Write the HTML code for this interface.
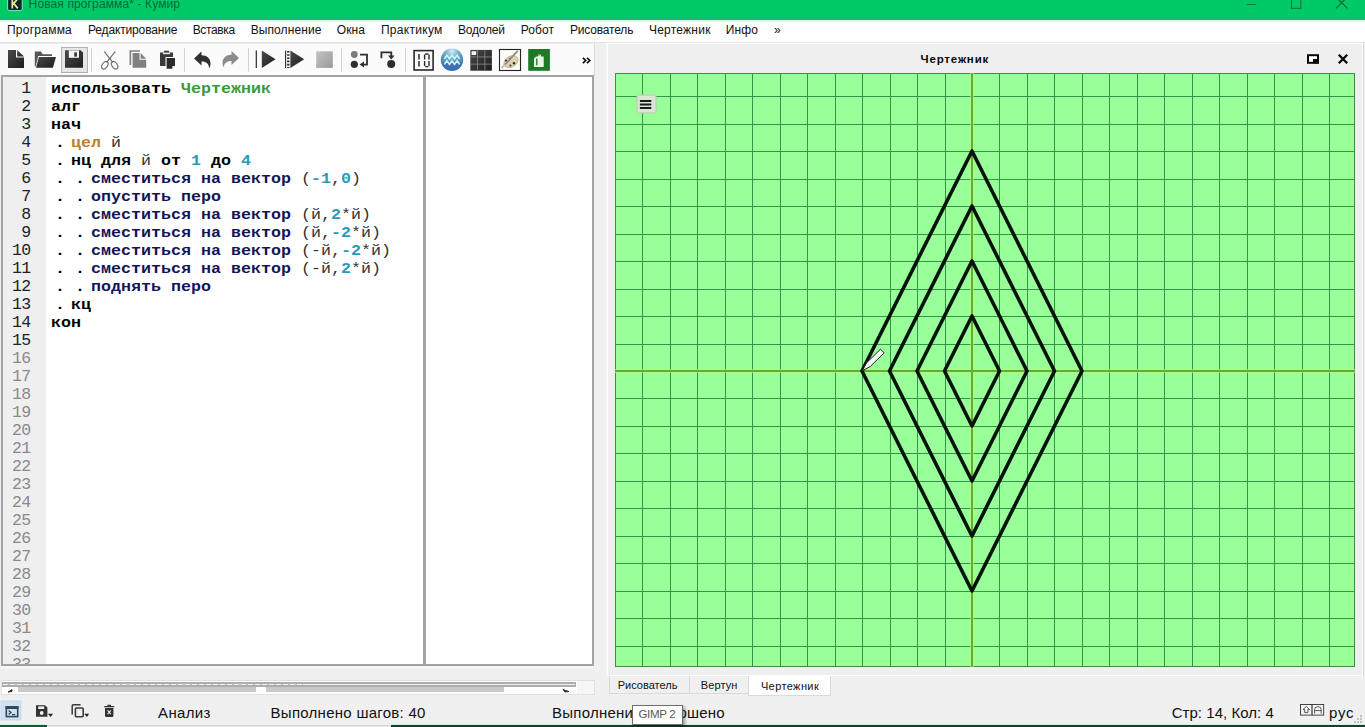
<!DOCTYPE html>
<html lang="ru"><head><meta charset="utf-8"><title>Кумир</title>
<style>
*{box-sizing:border-box;margin:0;padding:0}
html,body{width:1365px;height:727px;overflow:hidden;background:#f0f0f0}
body{position:relative;font-family:"Liberation Sans","DejaVu Sans",sans-serif;color:#000}
.abs{position:absolute}
#title{left:0;top:0;width:1365px;height:20px;background:linear-gradient(#00ca68 0,#00ca68 15px,#14bd72 19px,#22b876 20px)}
.tx{position:absolute;white-space:nowrap;line-height:1;color:#111}
#menu{left:0;top:20px;width:1365px;height:23px;background:#fff}
#tb{left:0;top:43px;width:595px;height:33px;background:#fbfbfb;border-top:1px solid #ebebeb;border-right:1px solid #dcdcdc}
.sep{position:absolute;top:48px;width:1px;height:24px;background:#cfcfcf}
#ed{left:1px;top:75px;width:593px;height:591px;border:2px solid #a3a3a3;background:#fff;overflow:hidden}
#gut{left:0;top:0;width:43px;height:587px;background:#efefef}
#split{left:420px;top:0;width:3px;height:587px;background:#a3a3a3}
.ln{position:absolute;left:0;width:27.5px;text-align:right;font-family:"Liberation Mono","DejaVu Sans Mono",monospace;font-size:16.5px;line-height:18px;color:#8a8a8a;letter-spacing:-0.6px}
.ln.k{color:#222}
.cl{position:absolute;left:48px;white-space:pre;font-family:"Liberation Mono",monospace;font-size:16.67px;line-height:18px;font-weight:bold;color:#000;height:18px;transform:scaleY(0.885);transform-origin:0 13.4px}
.cl .d{display:inline-block;width:20px;padding-left:4px}
.cl .g{color:#3a9a3a}.cl .o{color:#b8822e}.cl .n{font-weight:normal;color:#333}
.cl .b{color:#2a9ab8}.cl .f{color:#14145a}
#panel{left:607px;top:43px;width:756px;height:633px;background:#efefef;border:1px solid #fff;box-shadow:1px 0 0 #d6d6d6,-1px -1px 0 #f8f8f8}
#cv{left:615px;top:73px;width:740px;height:594px}
.tab{position:absolute;top:676px;height:18px;border:1px solid #d9d9d9;border-top:none;background:#f0f0f0}
</style></head><body>
<div id="title" class="abs"></div>
<!--TITLEICONS-->
<div id="menu" class="abs"></div>
<div id="tb" class="abs"></div>
<svg class="abs" style="left:0;top:43px" width="596" height="32" viewBox="0 43 596 32">
<defs>
<linearGradient id="dk" x1="0" y1="0" x2="1" y2="1"><stop offset="0" stop-color="#4a4a4a"/><stop offset="1" stop-color="#1e1e1e"/></linearGradient>
<linearGradient id="gy" x1="0" y1="0" x2="1" y2="1"><stop offset="0" stop-color="#c4c4c4"/><stop offset="1" stop-color="#9a9a9a"/></linearGradient>
<radialGradient id="aq" cx="0.5" cy="0.12" r="0.95"><stop offset="0" stop-color="#d4eefa"/><stop offset="0.35" stop-color="#6aa6c8"/><stop offset="0.7" stop-color="#4686b0"/><stop offset="1" stop-color="#3a70b4"/></radialGradient>
</defs>
<!-- new -->
<g transform="translate(8 50)" fill="url(#dk)"><path d="M0 0H8V7.6H16V18H0Z"/><path d="M9.2 0L16 6.4H9.2Z"/></g>
<!-- open -->
<g transform="translate(0 0)"><path d="M34.8 51.4H41L42.6 54.2H52V56H38.2L35.6 66.5H34.8Z" fill="#555"/><path d="M38.8 56.9H56L52.9 67.7H36Z" fill="url(#dk)"/></g>
<!-- save -->
<rect x="61.5" y="47.5" width="26" height="25" fill="#e6e6e6" stroke="#b2b2b2"/>
<path d="M65 50.2H80.5L83 52.6V67.8H65Z" fill="url(#dk)"/><rect x="68.8" y="50.4" width="10.2" height="7.4" fill="#f4f4f4"/><rect x="74.3" y="52.4" width="2.6" height="4.2" fill="#333"/>
<!-- separators -->
<path d="M91.5 48V72M184.5 48V72M248.5 48V72M341.5 48V72M405.5 48V72" stroke="#d2d2d2" stroke-width="1"/>
<!-- cut -->
<g fill="none" stroke="#707070" stroke-width="1.15" stroke-linecap="round"><path d="M104.5 51.8L112.6 62.2M115 51.8L106.9 62.2"/><ellipse cx="104.9" cy="65.2" rx="2.6" ry="4.2" transform="rotate(34 104.9 65.2)"/><ellipse cx="114.6" cy="65.2" rx="2.6" ry="4.2" transform="rotate(-34 114.6 65.2)"/><circle cx="109.75" cy="58.9" r="0.5"/></g>
<!-- copy -->
<g fill="#808080"><path d="M129.5 50.2H140V51.8H131.2V65H129.5Z"/><path d="M132.6 53H139.5V59.8H146.2V67.8H132.6Z"/><path d="M140.6 53L146.2 58.7H140.6Z"/></g>
<!-- paste -->
<g><path d="M160 52.4H164V50.8H169V52.4H173V57H165.5V66H160Z" fill="#3a3a3a"/><rect x="163" y="52.6" width="7" height="1.6" fill="#e8e8e8"/><path d="M166.6 58H175V65.6L172 68.7H166.6Z" fill="#2a2a2a"/><path d="M172.4 66H175L172.4 68.7Z" fill="#f0f0f0"/></g>
<!-- undo -->
<path d="M201.5 51.5V55.3C207 55.3 210.5 58.5 210.5 63.5C210.5 65.5 210 67 209 68.2C209 64 206.5 61.6 201.5 61.6V65.4L194 58.4Z" fill="#303030"/>
<!-- redo -->
<path d="M231.5 51V54.8C226 54.8 222.5 58 222.5 63C222.5 65 223 66.2 224 67.2C224 63.5 226.5 61.1 231.5 61.1V64.9L239 57.9Z" fill="#8c8c8c"/>
<!-- run -->
<path d="M256.3 50.5V68" stroke="#2a2a2a" stroke-width="1.2"/><path d="M261.8 50.5L275.6 59.3L261.8 68.1Z" fill="url(#dk)"/>
<!-- step run -->
<path d="M285.6 50.5V68" stroke="#2a2a2a" stroke-width="1.1"/><path d="M288.3 51V68" stroke="#2a2a2a" stroke-width="2.4" stroke-dasharray="1.6 1.6"/><path d="M290.4 50.5L304.2 59.3L290.4 68.1Z" fill="url(#dk)"/>
<!-- stop -->
<rect x="316.2" y="51.3" width="16.6" height="16.6" fill="url(#gy)"/>
<!-- step in -->
<circle cx="354.3" cy="54.5" r="3.4" fill="#7c7c7c"/><circle cx="354.3" cy="64.3" r="3.6" fill="#2e2e2e"/><path d="M360 54.6H367V64.6H363" fill="none" stroke="#2e2e2e" stroke-width="1.8"/><path d="M359.6 64.6L364 61.6V67.6Z" fill="#2e2e2e"/>
<!-- step over -->
<path d="M381.4 58.2V52.4H391.3V56" fill="none" stroke="#2e2e2e" stroke-width="1.8"/><path d="M388 55.6H394.6L391.3 59.6Z" fill="#2e2e2e"/><circle cx="391.2" cy="64" r="4" fill="#2e2e2e"/>
<!-- 10 -->
<rect x="414.1" y="50.6" width="19" height="19.4" fill="#fbfbfb" stroke="#2a2a2a" stroke-width="1.6"/><path d="M419 54V59.6M419 61V66.6" stroke="#2a2a2a" stroke-width="1.5"/><path d="M424.6 54.6V59.6M424.6 61V66M429 54.6V59.6M429 61V66M425.2 54H428.4M425.2 66.6H428.4" stroke="#2a2a2a" stroke-width="1.4"/>
<!-- aquarius -->
<circle cx="452" cy="59.8" r="11.2" fill="url(#aq)"/><path d="M441.6 63.2Q452 60 462.4 63.2A11.2 11.2 0 0 1 441.6 63.2Z" fill="#3a68b6" opacity="0.75"/><path d="M444.3 58.9L446.9 55.3L449.45 58.9L452 55.3L454.55 58.9L457.1 55.3L459.7 58.9M444.3 64.4L446.9 60.8L449.45 64.4L452 60.8L454.55 64.4L457.1 60.8L459.7 64.4" fill="none" stroke="#c9f1f8" stroke-width="1.7" stroke-linejoin="miter"/>
<!-- grid -->
<rect x="470.3" y="49.9" width="21.6" height="20.8" fill="url(#dk)"/><path d="M477.5 49.9V70.7M484.8 49.9V70.7M470.3 56.9H491.9M470.3 64.1H491.9" stroke="#8a8a8a" stroke-width="0.8"/><rect x="471.6" y="51.2" width="4.6" height="3.8" fill="#f6f6f6"/>
<!-- palette -->
<rect x="499.5" y="49.5" width="21" height="21" fill="#fcfcf8" stroke="#222" stroke-width="1.1"/><ellipse cx="511" cy="61.6" rx="7.6" ry="5.4" transform="rotate(-30 511 61.6)" fill="#ddd2b2" stroke="#b0a484" stroke-width="0.6"/><circle cx="506" cy="60.6" r="1.1" fill="#3a342a"/><circle cx="510.4" cy="65.6" r="1.1" fill="#4a4030"/><circle cx="514" cy="63.2" r="1.2" fill="#2e2a26"/><circle cx="509.6" cy="58.6" r="0.9" fill="#5a4a3a"/><path d="M503.6 66L517.8 50.8" stroke="#8a8a86" stroke-width="1.7"/><path d="M501.6 68L505 64.6" stroke="#c8c4bc" stroke-width="2.2"/>
<!-- robot green -->
<rect x="528.2" y="49" width="21.7" height="21.8" fill="#1d7926"/><path d="M534 58.4L536 56.6H538V54.6H541V56.6H543.7V66.9H534Z" fill="#e6f6e2"/><path d="M536.8 58.6V65.2" stroke="#1d5a22" stroke-width="1.2"/><path d="M538.4 55.6L540.6 54.4" stroke="#1d7926" stroke-width="0.8"/>
<!-- more -->
<path d="M582.9 57.8L585.7 60.5L582.9 63.2M587 57.8L589.8 60.5L587 63.2" fill="none" stroke="#0a0a0a" stroke-width="1.7"/>
</svg>

<div id="ed" class="abs">
<div id="gut" class="abs"></div>
<div id="split" class="abs"></div>
<div class="ln k" style="top:3px">1</div>
<div class="ln k" style="top:21px">2</div>
<div class="ln k" style="top:39px">3</div>
<div class="ln k" style="top:57px">4</div>
<div class="ln k" style="top:75px">5</div>
<div class="ln k" style="top:93px">6</div>
<div class="ln k" style="top:111px">7</div>
<div class="ln k" style="top:129px">8</div>
<div class="ln k" style="top:147px">9</div>
<div class="ln k" style="top:165px">10</div>
<div class="ln k" style="top:183px">11</div>
<div class="ln k" style="top:201px">12</div>
<div class="ln k" style="top:219px">13</div>
<div class="ln k" style="top:237px">14</div>
<div class="ln k" style="top:255px">15</div>
<div class="ln" style="top:273px">16</div>
<div class="ln" style="top:291px">17</div>
<div class="ln" style="top:309px">18</div>
<div class="ln" style="top:327px">19</div>
<div class="ln" style="top:345px">20</div>
<div class="ln" style="top:363px">21</div>
<div class="ln" style="top:381px">22</div>
<div class="ln" style="top:399px">23</div>
<div class="ln" style="top:417px">24</div>
<div class="ln" style="top:435px">25</div>
<div class="ln" style="top:453px">26</div>
<div class="ln" style="top:471px">27</div>
<div class="ln" style="top:489px">28</div>
<div class="ln" style="top:507px">29</div>
<div class="ln" style="top:525px">30</div>
<div class="ln" style="top:543px">31</div>
<div class="ln" style="top:561px">32</div>
<div class="ln" style="top:579px">33</div>
<div class="cl" style="top:3px">использовать <span class="g">Чертежник</span></div>
<div class="cl" style="top:21px">алг</div>
<div class="cl" style="top:39px">нач</div>
<div class="cl" style="top:57px"><span class="d">.</span><span class="o">цел</span> <span class="n">й</span></div>
<div class="cl" style="top:75px"><span class="d">.</span>нц для <span class="n">й</span> от <span class="b">1</span> до <span class="b">4</span></div>
<div class="cl" style="top:93px"><span class="d">.</span><span class="d">.</span><span class="f">сместиться на вектор</span> <span class="n">(</span><span class="b">-1</span><span class="n">,</span><span class="b">0</span><span class="n">)</span></div>
<div class="cl" style="top:111px"><span class="d">.</span><span class="d">.</span><span class="f">опустить перо</span></div>
<div class="cl" style="top:129px"><span class="d">.</span><span class="d">.</span><span class="f">сместиться на вектор</span> <span class="n">(й,</span><span class="b">2</span><span class="n">*й)</span></div>
<div class="cl" style="top:147px"><span class="d">.</span><span class="d">.</span><span class="f">сместиться на вектор</span> <span class="n">(й,</span><span class="b">-2</span><span class="n">*й)</span></div>
<div class="cl" style="top:165px"><span class="d">.</span><span class="d">.</span><span class="f">сместиться на вектор</span> <span class="n">(-й,</span><span class="b">-2</span><span class="n">*й)</span></div>
<div class="cl" style="top:183px"><span class="d">.</span><span class="d">.</span><span class="f">сместиться на вектор</span> <span class="n">(-й,</span><span class="b">2</span><span class="n">*й)</span></div>
<div class="cl" style="top:201px"><span class="d">.</span><span class="d">.</span><span class="f">поднять перо</span></div>
<div class="cl" style="top:219px"><span class="d">.</span>кц</div>
<div class="cl" style="top:237px">кон</div>
</div>
<div id="panel" class="abs"></div>

<svg id="cv" class="abs" width="740" height="594" viewBox="0 0 740 594">
<rect width="740" height="594" fill="#99ff99"/>
<path d="M27.5 0V594M55.5 0V594M82.5 0V594M0 23.5H740M110.5 0V594M0 51.5H740M137.5 0V594M0 78.5H740M165.5 0V594M0 106.5H740M192.5 0V594M0 133.5H740M220.5 0V594M0 161.5H740M247.5 0V594M0 188.5H740M275.5 0V594M0 216.5H740M302.5 0V594M0 243.5H740M330.5 0V594M0 271.5H740M384.5 0V594M0 325.5H740M412.5 0V594M0 353.5H740M439.5 0V594M0 380.5H740M467.5 0V594M0 408.5H740M494.5 0V594M0 435.5H740M522.5 0V594M0 463.5H740M549.5 0V594M0 490.5H740M577.5 0V594M0 518.5H740M604.5 0V594M0 545.5H740M632.5 0V594M0 573.5H740M659.5 0V594M687.5 0V594M714.5 0V594" stroke="#36934a" stroke-width="1" fill="none" shape-rendering="crispEdges"/>
<rect x="0.5" y="0.5" width="739" height="593" fill="none" stroke="#3a8f48" stroke-width="1" shape-rendering="crispEdges"/>
<path d="M357.0 0V594 M0 298.0H740" stroke="#c4f87c" stroke-width="4" fill="none" opacity="0.6"/>
<path d="M357.0 0V594 M0 298.0H740" stroke="#62ac2e" stroke-width="2" fill="none"/>
<polygon points="329.5,298.0 357.0,243.0 384.5,298.0 357.0,353.0" fill="none" stroke="#04140a" stroke-width="3.6" stroke-linejoin="round"/>
<polygon points="302.0,298.0 357.0,188.0 412.0,298.0 357.0,408.0" fill="none" stroke="#04140a" stroke-width="3.6" stroke-linejoin="round"/>
<polygon points="274.5,298.0 357.0,133.0 439.5,298.0 357.0,463.0" fill="none" stroke="#04140a" stroke-width="3.6" stroke-linejoin="round"/>
<polygon points="247.0,298.0 357.0,78.0 467.0,298.0 357.0,518.0" fill="none" stroke="#04140a" stroke-width="3.6" stroke-linejoin="round"/>
<g transform="translate(247.0 298.0) rotate(-44.5)"><path d="M0.5 0L9 -2.6H28.5V2.6H9Z" fill="#f4f4f4" stroke="#1a1a1a" stroke-width="0.9"/></g>
<g transform="translate(21.5 21.5)"><rect x="0.5" y="0.5" width="19" height="18" rx="1.5" fill="#dbe6d7" stroke="#b4c8b0"/><path d="M3.4 6.6H14.8M3.4 10H14.8M3.4 13.4H14.8" stroke="#1a1a1a" stroke-width="2"/></g>
</svg>
<div class="tab" style="left:609px;width:81px"></div><div class="tab" style="left:689px;width:60px"></div><div class="tab" style="left:748px;width:83px;height:20px;background:#fff"></div>
<!-- title icon + window controls -->
<svg class="abs" style="left:0;top:0" width="1365" height="20" viewBox="0 0 1365 20">
<rect x="7.6" y="-3" width="14.6" height="13.6" rx="1.6" fill="#0b2a26" stroke="#8ef0d6" stroke-width="0.9"/>
<path d="M12.3 -1V8.4M12.6 4.6L17.6 -1M13.6 3.4L17.8 8.4" fill="none" stroke="#ece79c" stroke-width="1.7"/>
<path d="M1246.6 4.5H1256" stroke="#0a7a44" stroke-width="1.1"/>
<rect x="1291.5" y="-2" width="9.2" height="10.4" fill="none" stroke="#0a7a44" stroke-width="1.1"/>
<path d="M1336 -3L1347.4 8.4M1347.4 -3L1336 8.4" stroke="#0a6a3c" stroke-width="1.2"/>
</svg>
<!-- menu bar top fade -->
<div class="abs" style="left:0;top:20px;width:1365px;height:3px;background:linear-gradient(#c6f7e2,#fff)"></div>
<div class="abs" style="left:0;top:42px;width:1365px;height:1px;background:#e4e4e4"></div>
<!-- dock title buttons -->
<svg class="abs" style="left:1300px;top:48px" width="60" height="22" viewBox="1300 48 60 22">
<rect x="1308" y="55.2" width="10" height="7.6" fill="#fff" stroke="#0a0a0a" stroke-width="2"/><rect x="1313" y="59" width="5.5" height="4.4" fill="#0a0a0a"/>
<path d="M1338.8 54.8L1347.2 63.2M1347.2 54.8L1338.8 63.2" stroke="#0a0a0a" stroke-width="2.3"/>
</svg>
<!-- collapsed terminal strip -->
<div class="abs" style="left:1px;top:667px;width:593px;height:1px;background:#fcfcfc"></div>
<div class="abs" style="left:1px;top:680px;width:594px;height:15px;background:#fff;border:1px solid #e0e0e0"></div>
<div class="abs" style="left:2px;top:682px;width:574px;height:5px;background:#adadad"></div>
<div class="abs" style="left:3px;top:684px;width:300px;height:1px;background:repeating-linear-gradient(90deg,#f2f2f2 0,#f2f2f2 5px,#c4c4c4 5px,#c4c4c4 7px)"></div><div class="abs" style="left:303px;top:684px;width:272px;height:1px;background:#ededed"></div><div class="abs" style="left:577px;top:681px;width:17px;height:13px;background:#f6f6f6"></div>
<div class="abs" style="left:18px;top:687px;width:238px;height:5px;background:#c9c9c9"></div>
<div class="abs" style="left:266px;top:687px;width:238px;height:5px;background:#c9c9c9"></div>
<svg class="abs" style="left:0;top:686px" width="596" height="8" viewBox="0 686 596 8"><path d="M8 692L12 689.6V691.6Z M563 689.4L569 691.6L565 692Z" fill="#222" stroke="#222" stroke-width="0.8"/></svg>
<!-- status bar icons -->
<svg class="abs" style="left:0;top:698px" width="130" height="27" viewBox="0 698 130 27">
<rect x="1" y="701" width="20" height="19" fill="#cfe2f1" stroke="#bcd6ea" stroke-width="0.8"/>
<rect x="6.3" y="707" width="11.4" height="9.6" fill="none" stroke="#34465a" stroke-width="1.6"/><rect x="5.5" y="706.2" width="13" height="2.8" fill="#34465a"/><path d="M8.6 710.4L11 712.4L8.6 714.4M12 714.6H15.2" fill="none" stroke="#34465a" stroke-width="1.3"/>
<path d="M36 705.2H45L47.4 707.6V716.7H36Z" fill="#333"/><rect x="38.2" y="706.4" width="6" height="2.6" fill="#f0f0f0"/><circle cx="41.7" cy="713" r="1.9" fill="#f0f0f0"/><path d="M48 713.8H53L50.5 717Z" fill="#222"/>
<path d="M72.2 714.6V706Q72.2 704.8 73.4 704.8H80.6" fill="none" stroke="#3a3a3a" stroke-width="1.5"/><rect x="75.4" y="708" width="7.8" height="8.8" rx="1" fill="none" stroke="#3a3a3a" stroke-width="1.6"/><path d="M84.4 713.8H89.2L86.8 717Z" fill="#222"/>
<path d="M105 708H113.4V715.4Q113.4 716.9 112 716.9H106.4Q105 716.9 105 715.4Z" fill="#333"/><path d="M104.2 706.6H114.2M107.4 705.4H111" stroke="#333" stroke-width="1.4"/><path d="M107.6 710.4L110.8 714.2M110.8 710.4L107.6 714.2" stroke="#f0f0f0" stroke-width="1.1"/>
</svg>
<svg class="abs" style="left:1296px;top:700px" width="69" height="25" viewBox="1296 700 69 25">
<rect x="1300.5" y="704.5" width="11.6" height="10.6" fill="#f4f4f4" stroke="#333" stroke-width="0.9"/><rect x="1312.1" y="704.5" width="11.6" height="10.6" fill="#f4f4f4" stroke="#333" stroke-width="0.9"/>
<path d="M1306.3 706.4L1309.6 709.6H1307.9V712.6H1304.7V709.6H1303Z" fill="none" stroke="#333" stroke-width="0.8"/>
<path d="M1314.6 713.6V709.6Q1314.6 706.6 1317.9 706.6Q1321.2 706.6 1321.2 709.6V713.6M1314.6 710.6H1321.2" fill="none" stroke="#333" stroke-width="0.8"/>
<g fill="#c2c2c2"><rect x="1360" y="715" width="2" height="2"/><rect x="1357" y="718" width="2" height="2"/><rect x="1360" y="718" width="2" height="2"/><rect x="1354" y="721" width="2" height="2"/><rect x="1357" y="721" width="2" height="2"/><rect x="1360" y="721" width="2" height="2"/></g>
</svg>
<!-- bottom strip -->
<div class="abs" style="left:0;top:723px;width:47px;height:2px;background:linear-gradient(#f0f4f2,#cdeede)"></div>
<div class="abs" style="left:391px;top:723px;width:974px;height:2px;background:linear-gradient(#f0f4f2,#cdeede)"></div>
<div class="abs" style="left:0;top:725px;width:47px;height:2px;background:#0c5a38"></div>
<div class="abs" style="left:47px;top:725px;width:344px;height:2px;background:linear-gradient(#cfcfcf,#ededed)"></div>
<div class="abs" style="left:391px;top:725px;width:974px;height:2px;background:#123f2c"></div>
<!-- tooltip -->
<div class="abs" style="z-index:5;left:632px;top:705px;width:51px;height:20px;background:#fff;border:1px solid #6e6e6e;box-shadow:2px 2px 3px rgba(0,0,0,.35)"></div>

<div class="tx" style="left:28.6px;top:-1.9px;font-size:12px;letter-spacing:0.12px;color:#03693a">Новая программа* - Кумир</div>
<div class="tx" style="left:7.0px;top:24.2px;font-size:12px;letter-spacing:0.24px;">Программа</div>
<div class="tx" style="left:88.0px;top:24.2px;font-size:12px;letter-spacing:-0.15px;">Редактирование</div>
<div class="tx" style="left:192.7px;top:24.2px;font-size:12px;letter-spacing:-0.37px;">Вставка</div>
<div class="tx" style="left:250.7px;top:24.2px;font-size:12px;letter-spacing:0.10px;">Выполнение</div>
<div class="tx" style="left:336.8px;top:24.2px;font-size:12px;letter-spacing:0.07px;">Окна</div>
<div class="tx" style="left:380.9px;top:24.2px;font-size:12px;letter-spacing:0.30px;">Практикум</div>
<div class="tx" style="left:457.9px;top:24.2px;font-size:12px;letter-spacing:-0.19px;">Водолей</div>
<div class="tx" style="left:520.7px;top:24.2px;font-size:12px;letter-spacing:0.12px;">Робот</div>
<div class="tx" style="left:569.9px;top:24.2px;font-size:12px;letter-spacing:-0.17px;">Рисователь</div>
<div class="tx" style="left:648.9px;top:24.2px;font-size:12px;letter-spacing:0.24px;">Чертежник</div>
<div class="tx" style="left:725.8px;top:24.2px;font-size:12px;letter-spacing:0.13px;">Инфо</div>
<div class="tx" style="left:774.0px;top:24.2px;font-size:12px;letter-spacing:0.00px;">»</div>
<div class="tx" style="left:920.5px;top:54.1px;font-size:11.5px;letter-spacing:0.83px;font-weight:bold;color:#0a0a0a">Чертежник</div>
<div class="tx" style="left:617.7px;top:680.2px;font-size:11px;letter-spacing:0.01px;">Рисователь</div>
<div class="tx" style="left:700.7px;top:680.2px;font-size:11px;letter-spacing:0.12px;">Вертун</div>
<div class="tx" style="left:760.9px;top:681.1px;font-size:11px;letter-spacing:0.40px;">Чертежник</div>
<div class="tx" style="left:158.1px;top:704.5px;font-size:15px;letter-spacing:0.31px;">Анализ</div>
<div class="tx" style="left:270.6px;top:704.5px;font-size:15px;letter-spacing:0.27px;">Выполнено шагов: 40</div>
<div class="tx" style="left:552.1px;top:704.5px;font-size:15px;letter-spacing:0.23px;">Выполнение завершено</div>
<div class="tx" style="left:1171.7px;top:704.5px;font-size:15px;letter-spacing:0.04px;">Стр: 14, Кол: 4</div>
<div class="tx" style="left:1329.1px;top:704.5px;font-size:15px;letter-spacing:0.64px;">рус</div>
<div class="tx" style="left:638.4px;top:709.1px;font-size:11.5px;letter-spacing:-0.32px;color:#575757;z-index:6">GIMP 2</div>
</body></html>
